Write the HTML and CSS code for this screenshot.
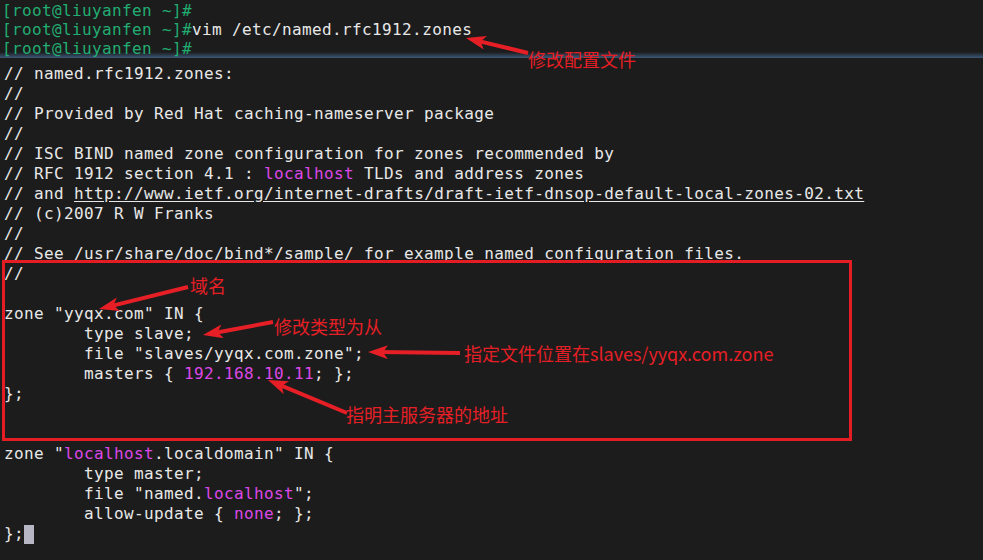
FILE: index.html
```html
<!DOCTYPE html>
<html lang="zh-CN">

<head>
    <meta charset="UTF-8">
    <meta name="viewport" content="width=device-width, initial-scale=1.0">
    <title>named.rfc1912.zones</title>
    <link rel="stylesheet" href="styles.css">
</head>

<body>
    <div class="term">
        <!-- shell prompt -->
        <div class="shell">
            <div class="line"><span class="prompt">[root@liuyanfen ~]#</span></div>
            <div class="line"><span class="prompt">[root@liuyanfen ~]#</span>vim /etc/named.rfc1912.zones</div>
            <div class="line"><span class="prompt">[root@liuyanfen ~]#</span></div>
        </div>
        <div class="sep"></div>

        <!-- vim buffer -->
        <div class="vim">
            <div class="line">// named.rfc1912.zones:</div>
            <div class="line">//</div>
            <div class="line">// Provided by Red Hat caching-nameserver package</div>
            <div class="line">//</div>
            <div class="line">// ISC BIND named zone configuration for zones recommended by</div>
            <div class="line">// RFC 1912 section 4.1 : <span class="const">localhost</span> TLDs and address zones</div>
            <div class="line">// and <span class="link">http://www.ietf.org/internet-drafts/draft-ietf-dnsop-default-local-zones-02.txt</span></div>
            <div class="line">// (c)2007 R W Franks</div>
            <div class="line">//</div>
            <div class="line">// See /usr/share/doc/bind*/sample/ for example named configuration files.</div>
            <div class="line">//</div>
            <div class="line"> </div>
            <div class="line">zone "yyqx.com" IN {</div>
            <div class="line">        type slave;</div>
            <div class="line">        file "slaves/yyqx.com.zone";</div>
            <div class="line">        masters { <span class="const">192.168.10.11</span>; };</div>
            <div class="line">};</div>
            <div class="line"> </div>
            <div class="line"> </div>
            <div class="line">zone "<span class="const">localhost</span>.localdomain" IN {</div>
            <div class="line">        type master;</div>
            <div class="line">        file "named.<span class="const">localhost</span>";</div>
            <div class="line">        allow-update { <span class="const">none</span>; };</div>
            <div class="line">};<span class="cursor"></span></div>
        </div>
    </div>

    <!-- annotations drawn over the screenshot -->
    <div class="box"></div>

    <svg class="arrows" width="983" height="560" viewBox="0 0 983 560">
        <defs>
            <marker id="head" viewBox="0 0 20 14" refX="10" refY="7" markerWidth="20" markerHeight="14"
                markerUnits="userSpaceOnUse" orient="auto">
                <path d="M0,0 L20,7 L0,14 L5,7 Z" fill="#e61f26" />
            </marker>
        </defs>
        <g stroke="#e61f26" stroke-width="4" marker-end="url(#head)">
            <line x1="528" y1="53" x2="475.7" y2="40.4" />
            <line x1="188" y1="287" x2="108.7" y2="306.6" />
            <line x1="273" y1="322" x2="212.8" y2="333.2" />
            <line x1="460" y1="353" x2="378" y2="352.1" />
            <line x1="347" y1="413" x2="277.2" y2="383.9" />
        </g>
    </svg>

    <span class="note n-config">修改配置文件</span>
    <span class="note n-domain">域名</span>
    <span class="note n-type">修改类型为从</span>
    <span class="note n-file">指定文件位置在slaves/yyqx.com.zone</span>
    <span class="note n-master">指明主服务器的地址</span>
</body>

</html>
```

FILE: styles.css
```css
body {
    margin: 0;
    width: 983px;
    height: 560px;
    overflow: hidden;
    background-color: #1c1c1c;
    position: relative;
}

.term {
    padding-top: 1px;
    font-family: "DejaVu Sans Mono", "Liberation Mono", monospace;
    font-size: 16px;
    letter-spacing: 0.37px;
    color: #e8e8e8;
}

.line {
    white-space: pre;
    height: 20px;
    line-height: 20px;
    padding-left: 4px;
}

.shell .line {
    height: 19px;
    line-height: 19px;
    padding-left: 2px;
}

.prompt {
    color: #22ad72;
}

.sep {
    height: 6px;
    margin-top: -6px;
    background: linear-gradient(#1c1c1c, #3d5879);
}

.vim {
    margin-top: 6px;
}

.const {
    color: #dc48e6;
}

.link {
    text-decoration: underline;
    text-underline-offset: 2px;
}

.cursor {
    display: inline-block;
    width: 10px;
    height: 19px;
    vertical-align: -5px;
    background-color: #b6b6c4;
}

.box {
    position: absolute;
    left: 2px;
    top: 260px;
    width: 850px;
    height: 181px;
    box-sizing: border-box;
    border: 3px solid #e41c24;
}

.arrows {
    position: absolute;
    left: 0;
    top: 0;
}

.note {
    position: absolute;
    font-family: "Noto Sans CJK SC", "Noto Sans", sans-serif;
    font-size: 18px;
    line-height: 18px;
    color: #e61f26;
    white-space: nowrap;
}

.n-config { left: 528px; top: 50px; }
.n-domain { left: 190px; top: 276px; }
.n-type { left: 274px; top: 317px; }
.n-file { left: 464px; top: 344px; }
.n-master { left: 346px; top: 405px; }
```
